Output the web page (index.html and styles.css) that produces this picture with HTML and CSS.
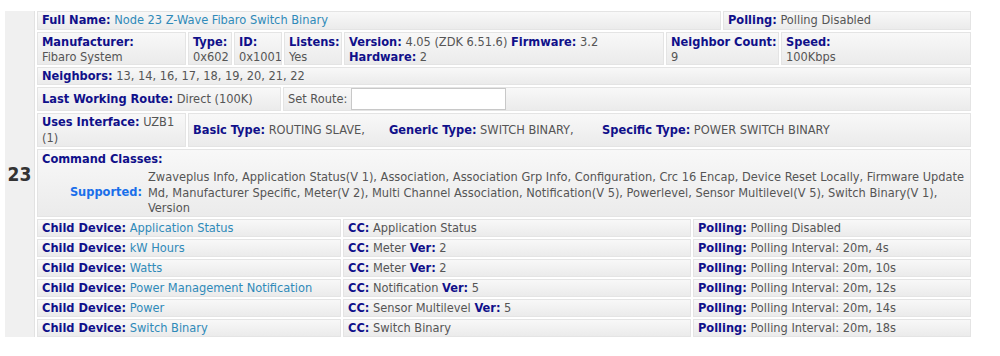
FILE: index.html
```html
<!DOCTYPE html>
<html lang="en">
<head>
<meta charset="utf-8">
<title>Node 23</title>
<link rel="stylesheet" href="styles.css">
</head>
<body>
<div class="node">
  <div class="node-id">23</div>
  <div class="rows">
    <div class="row h19">
      <div class="cell w-fullname"><b>Full Name:</b> <a href="#">Node 23 Z-Wave Fibaro Switch Binary</a></div>
      <div class="cell grow"><b>Polling:</b> Polling Disabled</div>
    </div>
    <div class="row h33">
      <div class="cell two w-manuf"><b>Manufacturer:</b><br>Fibaro System</div>
      <div class="cell two w-type"><b>Type:</b><br>0x602</div>
      <div class="cell two w-id"><b>ID:</b><br>0x1001</div>
      <div class="cell two w-listens"><b>Listens:</b><br>Yes</div>
      <div class="cell two w-version"><b>Version:</b> 4.05 (ZDK 6.51.6) <b>Firmware:</b> 3.2<br><b>Hardware:</b> 2</div>
      <div class="cell two w-ncount"><b>Neighbor Count:</b><br>9</div>
      <div class="cell two grow"><b>Speed:</b><br>100Kbps</div>
    </div>
    <div class="row h18">
      <div class="cell grow"><b>Neighbors:</b> 13, 14, 16, 17, 18, 19, 20, 21, 22</div>
    </div>
    <div class="row h24">
      <div class="cell middle w-route"><span><b>Last Working Route:</b> Direct (100K)</span></div>
      <div class="cell middle grow set-route">Set Route: <input type="text" class="route-input"></div>
    </div>
    <div class="row h34">
      <div class="cell two w-manuf wrap"><b>Uses Interface:</b> UZB1 (1)</div>
      <div class="cell middle grow">
        <span class="t-basic"><b>Basic Type:</b> ROUTING SLAVE,</span>
        <span class="t-generic"><b>Generic Type:</b> SWITCH BINARY,</span>
        <span><b>Specific Type:</b> POWER SWITCH BINARY</span>
      </div>
    </div>
    <div class="row h68">
      <div class="cell grow cc">
        <b>Command Classes:</b>
        <div class="cc-list">
          <span class="cc-label">Supported:</span>
          <span class="cc-values">Zwaveplus Info, Application Status(V 1), Association, Association Grp Info, Configuration, Crc 16 Encap, Device Reset Locally, Firmware Update Md, Manufacturer Specific, Meter(V 2), Multi Channel Association, Notification(V 5), Powerlevel, Sensor Multilevel(V 5), Switch Binary(V 1), Version</span>
        </div>
      </div>
    </div>
    <div class="row h18">
      <div class="cell w-child"><b>Child Device:</b> <a href="#">Application Status</a></div>
      <div class="cell w-cc"><b>CC:</b> Application Status</div>
      <div class="cell grow"><b>Polling:</b> Polling Disabled</div>
    </div>
    <div class="row h18">
      <div class="cell w-child"><b>Child Device:</b> <a href="#">kW Hours</a></div>
      <div class="cell w-cc"><b>CC:</b> Meter <b>Ver:</b> 2</div>
      <div class="cell grow"><b>Polling:</b> Polling Interval: 20m, 4s</div>
    </div>
    <div class="row h18">
      <div class="cell w-child"><b>Child Device:</b> <a href="#">Watts</a></div>
      <div class="cell w-cc"><b>CC:</b> Meter <b>Ver:</b> 2</div>
      <div class="cell grow"><b>Polling:</b> Polling Interval: 20m, 10s</div>
    </div>
    <div class="row h18">
      <div class="cell w-child"><b>Child Device:</b> <a href="#">Power Management Notification</a></div>
      <div class="cell w-cc"><b>CC:</b> Notification <b>Ver:</b> 5</div>
      <div class="cell grow"><b>Polling:</b> Polling Interval: 20m, 12s</div>
    </div>
    <div class="row h18">
      <div class="cell w-child"><b>Child Device:</b> <a href="#">Power</a></div>
      <div class="cell w-cc"><b>CC:</b> Sensor Multilevel <b>Ver:</b> 5</div>
      <div class="cell grow"><b>Polling:</b> Polling Interval: 20m, 14s</div>
    </div>
    <div class="row h18">
      <div class="cell w-child"><b>Child Device:</b> <a href="#">Switch Binary</a></div>
      <div class="cell w-cc"><b>CC:</b> Switch Binary</div>
      <div class="cell grow"><b>Polling:</b> Polling Interval: 20m, 18s</div>
    </div>
  </div>
</div>
</body>
</html>
```

FILE: styles.css
```css
html, body {
  margin: 0;
  background: #fff;
}

body {
  padding: 11px 29px 0 5px;
  font-family: "DejaVu Sans Condensed", "DejaVu Sans", sans-serif;
  font-size: 12.7px;
  color: #555;
}

.node {
  display: flex;
  gap: 2px;
  width: 966px;
}

.node-id {
  width: 29px;
  flex: none;
  background: #f0f0f0;
  border-right: 1px solid #e2e2e2;
  display: flex;
  align-items: center;
  justify-content: center;
  font-weight: bold;
  font-size: 19px;
  color: #333;
}

.rows {
  flex: 1;
  display: flex;
  flex-direction: column;
  gap: 2px;
}

.row {
  display: flex;
  gap: 2px;
}

.h18 { height: 18px; }
.h19 { height: 19px; }
.h24 { height: 24px; }
.h33 { height: 33px; }
.h34 { height: 34px; }
.h68 { height: 68px; }

.cell {
  box-sizing: border-box;
  padding: 0 4px;
  line-height: 16px;
  background: linear-gradient(#f8f8f8, #ebebeb);
  border: 1px solid #e4e4e4;
  white-space: nowrap;
  overflow: hidden;
}

.cell.two {
  line-height: 15px;
  padding-top: 1px;
}

.cell.wrap {
  white-space: normal;
  line-height: 15.5px;
  padding-top: 0;
}

.cell.middle {
  display: flex;
  align-items: center;
}

.grow { flex: 1; }

.w-fullname { width: 684px; }
.w-manuf { width: 149px; }
.w-type { width: 44px; }
.w-id { width: 48px; }
.w-listens { width: 58px; }
.w-version { width: 320px; }
.w-ncount { width: 113px; }
.w-route { width: 244px; }
.w-child { width: 304px; }
.w-cc { width: 348px; }

b {
  color: #10108a;
}

a {
  color: #2f8ab9;
  text-decoration: none;
}

.set-route {
  gap: 4px;
}

.route-input {
  box-sizing: border-box;
  width: 155px;
  height: 22px;
  margin: 0;
  border: 1px solid #c8c8c8;
  background: #fff;
}

.t-basic { width: 196px; flex: none; }
.t-generic { width: 213px; flex: none; }

.cc {
  white-space: normal;
  padding: 1px 0 0 4px;
}

.cc-list {
  display: flex;
  align-items: center;
  margin-top: 2px;
}

.cc-label {
  width: 100px;
  flex: none;
  text-align: right;
  font-weight: bold;
  color: #1a6fea;
  margin-right: 6px;
}

.cc-values {
  line-height: 15.5px;
}
```
